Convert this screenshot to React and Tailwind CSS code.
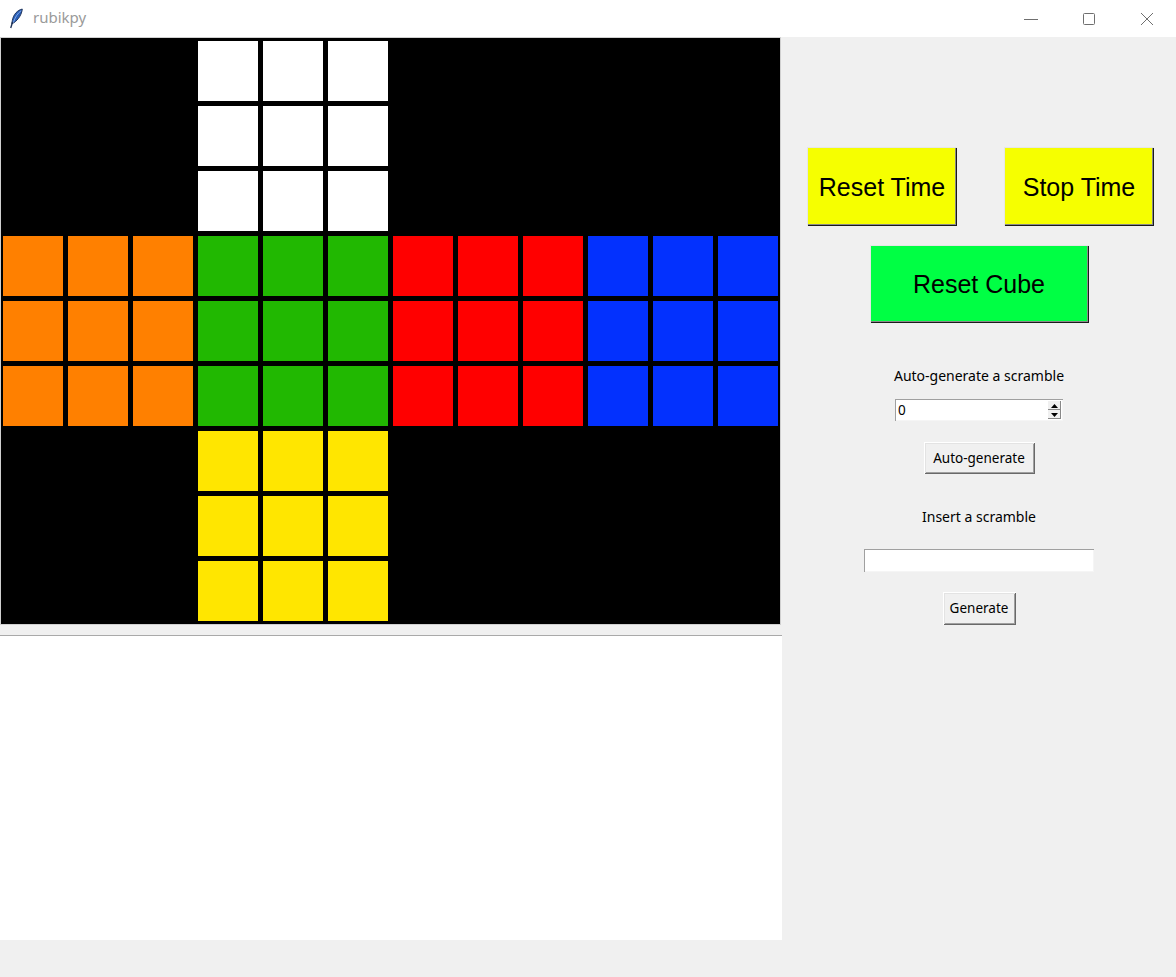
import React from "react";

const FACE = {
  W: "bg-[#ffffff]",
  O: "bg-[#ff8000]",
  G: "bg-[#21b801]",
  R: "bg-[#ff0000]",
  B: "bg-[#0331fe]",
  Y: "bg-[#ffe600]",
};

function faceAt(r, c) {
  if (r < 3) return c >= 3 && c <= 5 ? "W" : null;
  if (r < 6) {
    if (c < 3) return "O";
    if (c < 6) return "G";
    if (c < 9) return "R";
    return "B";
  }
  return c >= 3 && c <= 5 ? "Y" : null;
}

function Feather() {
  return (
    <svg width="15" height="21" viewBox="0 0 14 20">
      <path d="M12.5 1 C8 2 4 6 3 12 L2.5 15 L4.5 14 C9 11 12 6 12.5 1 Z" fill="#2a5fb8" stroke="#1b2f55" strokeWidth="0.9" />
      <path d="M11.5 2.5 C8 5 5.5 9 4 14" stroke="#8fb4ee" strokeWidth="0.8" fill="none" />
      <path d="M3.2 13.5 L1.5 19" stroke="#1b2f55" strokeWidth="1.3" />
    </svg>
  );
}

function TitleBar() {
  return (
    <div className="h-[37px] bg-white flex items-center shrink-0">
      <div className="ml-[9px] flex items-center">
        <Feather />
      </div>
      <span className="ml-[9px] text-[15px] text-[#9a9a9a] font-['Noto_Sans',sans-serif] leading-none pb-[2px]">rubikpy</span>
      <div className="ml-auto flex items-center h-full">
        <div className="w-[58px] h-full flex items-center justify-center">
          <svg width="14" height="14" viewBox="0 0 14 14"><path d="M0 7.5 H14" stroke="#6f6f6f" strokeWidth="1" /></svg>
        </div>
        <div className="w-[58px] h-full flex items-center justify-center">
          <svg width="14" height="14" viewBox="0 0 14 14"><rect x="1.5" y="1.5" width="11" height="11" rx="1" fill="none" stroke="#6f6f6f" strokeWidth="1" /></svg>
        </div>
        <div className="w-[58px] h-full flex items-center justify-center">
          <svg width="14" height="14" viewBox="0 0 14 14"><path d="M1 1 L13 13 M13 1 L1 13" stroke="#6f6f6f" strokeWidth="1" /></svg>
        </div>
      </div>
    </div>
  );
}

function Cube() {
  const cells = [];
  for (let r = 0; r < 9; r++) {
    for (let c = 0; c < 12; c++) {
      const f = faceAt(r, c);
      cells.push(
        <div key={`${r}-${c}`} className={f ? FACE[f] : ""} />
      );
    }
  }
  return (
    <div className="w-[781px] h-[588px] border border-[#d0d0d0] bg-black pl-[2px] pt-[3px] shrink-0">
      <div className="grid grid-cols-[repeat(12,60px)] grid-rows-[repeat(9,60px)] gap-[5px]">
        {cells}
      </div>
    </div>
  );
}

const bigBtn =
  "text-[25px] pt-[2px] font-['Liberation_Sans',Arial,sans-serif] text-black flex items-center justify-center shadow-[inset_1px_1px_0_#e6e6e6,inset_-1px_-1px_0_#1a1a1a,inset_-2px_-2px_0_#8a8a8a]";

const smallBtn =
  "bg-[#f0f0f0] text-[13.5px] text-black font-['Noto_Sans',sans-serif] flex items-center justify-center shadow-[inset_1px_1px_0_#ffffff,inset_-1px_-1px_0_#696969,inset_2px_2px_0_#e3e3e3,inset_-2px_-2px_0_#a0a0a0]";

function RightPanel() {
  return (
    <div className="flex-1 flex flex-col items-center font-['Noto_Sans',sans-serif] text-black">
      <div className="mt-[110px] w-full grid grid-cols-2">
        <div className="flex justify-center pl-[3px]">
          <div className={`${bigBtn} bg-[#f6ff00] w-[150px] h-[79px]`}>Reset Time</div>
        </div>
        <div className="flex justify-center pl-[3px]">
          <div className={`${bigBtn} bg-[#f6ff00] w-[150px] h-[79px]`}>Stop Time</div>
        </div>
      </div>
      <div className={`${bigBtn} bg-[#00ff44] w-[219px] h-[78px] mt-[19px]`}>Reset Cube</div>

      <div className="mt-[45px] h-[16px] leading-[16px] text-[14px]">Auto-generate a scramble</div>
      <div className="mt-[15px] w-[168px] h-[22px] bg-white flex items-stretch shadow-[inset_1px_1px_0_#a0a0a0,inset_-1px_-1px_0_#f5f5f5]">
        <div className="flex-1 pl-[3px] text-[13.5px] leading-[22px]">0</div>
        <div className="w-[13px] flex flex-col py-[2px] mr-[2px]">
          <div className="flex-1 bg-[#f0f0f0] flex items-center justify-center shadow-[inset_-1px_-1px_0_#888]">
            <svg width="7" height="4" viewBox="0 0 7 4"><path d="M0 4 L3.5 0 L7 4 Z" fill="#000" /></svg>
          </div>
          <div className="flex-1 bg-[#f0f0f0] flex items-center justify-center shadow-[inset_-1px_-1px_0_#888]">
            <svg width="7" height="4" viewBox="0 0 7 4"><path d="M0 0 L3.5 4 L7 0 Z" fill="#000" /></svg>
          </div>
        </div>
      </div>
      <div className={`${smallBtn} mt-[21px] w-[111px] h-[32px]`}>Auto-generate</div>

      <div className="mt-[35px] h-[16px] leading-[16px] text-[14px]">Insert a scramble</div>
      <div className="mt-[24px] w-[230px] h-[23px] bg-white shadow-[inset_1px_1px_0_#a0a0a0,inset_-1px_-1px_0_#f5f5f5]" />
      <div className={`${smallBtn} mt-[20px] w-[73px] h-[33px]`}>Generate</div>
    </div>
  );
}

export default function App() {
  return (
    <div className="w-[1176px] h-[977px] bg-[#f0f0f0] flex flex-col overflow-hidden">
      <TitleBar />
      <div className="flex flex-1">
        <div className="w-[782px] flex flex-col shrink-0">
          <Cube />
          <div className="mt-[10px] w-[782px] h-[305px] bg-white border-t border-[#a9a9a9]" />
        </div>
        <RightPanel />
      </div>
    </div>
  );
}
